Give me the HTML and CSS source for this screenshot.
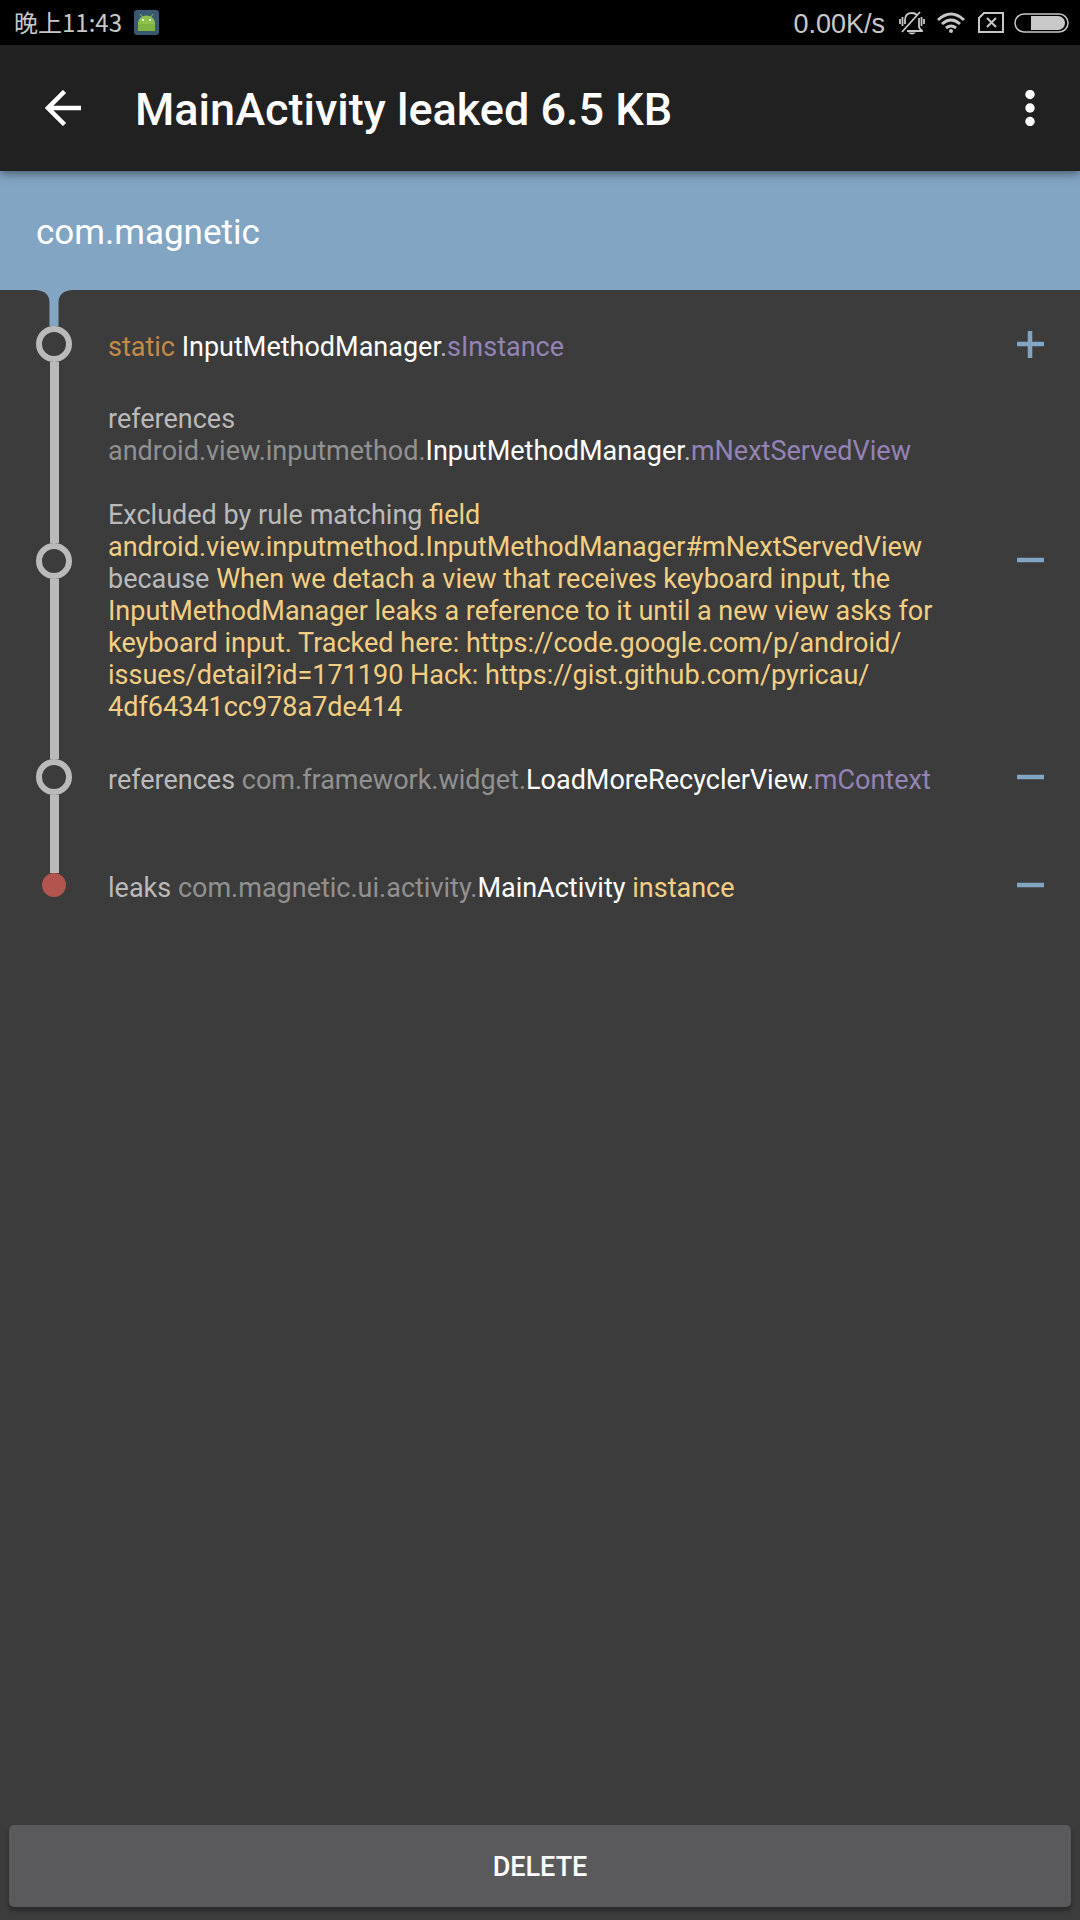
FILE: index.html
```html
<!DOCTYPE html>
<html lang="en">
<head>
<meta charset="utf-8">
<meta name="viewport" content="width=device-width, initial-scale=1">
<title>MainActivity leaked 6.5 KB</title>
<link rel="stylesheet" href="styles.css">
</head>
<body>
<div class="screen">
  <div class="status">
    <span class="status-text">晚上11:43</span>
    <svg class="app-icon" width="25" height="25" viewBox="0 0 25 25" aria-hidden="true">
      <rect width="25" height="25" rx="3" fill="#395972"/>
      <path d="M6 4l3 4M19 4l-3 4" stroke="#8bc34a" stroke-width="1"/>
      <path d="M4 21V13a8.500 7.500 0 0 1 17 0v8z" fill="#8bc34a"/>
      <path d="M4 14h17v7H4z" fill="#7fb344"/>
      <circle cx="9" cy="10" r="1" fill="#fff"/><circle cx="16" cy="10" r="1" fill="#fff"/>
    </svg>
    <span class="status-text status-speed">0.00K/s</span>
    <svg class="bell" width="26" height="24" viewBox="0 0 26 24" fill="none" stroke="#c8c8c8" stroke-width="1.800" aria-hidden="true">
      <path d="M6 13V9q0-7 7-7 3 0 5 2M20 7v8q0 3 3 4.500V20H8M1 8v5M3.500 6v9M25 8v5M22.500 6v9M3 21L21 1"/>
      <path d="M9 21.500h8q-4 4-8 0z" fill="#c8c8c8" stroke="none"/>
    </svg>
    <svg class="wifi" width="28" height="22" viewBox="0 0 28 22" fill="none" stroke="#c8c8c8" stroke-width="3" aria-hidden="true">
      <path d="M1 8q13-12 26 0M5 12q9-8 18 0M9 16q5-4 10 0"/>
      <circle cx="14" cy="19" r="2" fill="#c8c8c8" stroke="none"/>
    </svg>
    <svg class="sim" width="26" height="21" viewBox="0 0 26 21" fill="none" stroke="#c8c8c8" stroke-width="2" aria-hidden="true">
      <path d="M1 6l5-5h19v19H1zM9 6l9 9M18 6l-9 9"/>
    </svg>
    <svg class="battery" width="55" height="20" viewBox="0 0 55 20" aria-hidden="true">
      <rect x="1" y="1" width="53" height="18" rx="9" fill="none" stroke="#c8c8c8" stroke-width="1.500"/>
      <path d="M17 3h27a7 7 0 0 1 0 14H17z" fill="#c8c8c8"/>
    </svg>
  </div>

  <header class="toolbar">
    <button class="icon-button" type="button" aria-label="Back">
      <svg width="36" height="36" viewBox="0 0 36 36" fill="none" stroke="#fff" stroke-width="4.500" aria-hidden="true"><path d="M36 18H3M19.500 1.500L3 18l16.500 16.500"/></svg>
    </button>
    <h1 class="title">MainActivity leaked 6.5 KB</h1>
    <button class="icon-button" type="button" aria-label="More options">
      <svg width="10" height="36" viewBox="0 0 10 36" fill="#fff" aria-hidden="true"><circle cx="5" cy="4.500" r="4.700"/><circle cx="5" cy="18" r="4.700"/><circle cx="5" cy="31.500" r="4.700"/></svg>
    </button>
  </header>

  <main class="trace">
    <h2 class="package">com.magnetic</h2>
    <ul class="rows">
      <li class="row">
        <span class="rail">
          <svg class="funnel" width="36" height="36" viewBox="0 0 36 36" aria-hidden="true"><path d="M0 0H36Q22.500 1 22.500 13V36H13.500V13Q13.500 1 0 0z" fill="#83a5c4"/></svg>
          <span class="node"></span><span class="line"></span>
        </span>
        <p class="text"><span class="keyword">static</span> <span class="class">InputMethodManager</span>.<span class="field">sInstance</span></p>
        <button class="toggle" type="button" aria-label="Expand"><svg width="27" height="27" viewBox="0 0 27 27" stroke="#83a5c4" stroke-width="4.500" aria-hidden="true"><path d="M0 13h27M13 0v27"/></svg></button>
      </li>
      <li class="row">
        <span class="rail"><span class="line"></span><span class="node"></span><span class="line"></span></span>
        <p class="text">references <span class="dim">android.view.inputmethod.</span><span class="class">InputMethodManager</span>.<span class="field">mNextServedView</span><br><br>Excluded by rule matching <span class="extra">field android.view.inputmethod.InputMethodManager#mNextServedView</span> because <span class="extra">When we detach a view that receives keyboard input, the InputMethodManager leaks a reference to it until a new view asks for keyboard input. Tracked here: https://code.google.com/p/android/<wbr>issues/detail?id=171190 Hack: https://gist.github.com/pyricau/<wbr>4df64341cc978a7de414</span></p>
        <button class="toggle" type="button" aria-label="Collapse"><svg width="27" height="27" viewBox="0 0 27 27" stroke="#83a5c4" stroke-width="4.500" aria-hidden="true"><path d="M0 13h27"/></svg></button>
      </li>
      <li class="row">
        <span class="rail"><span class="line"></span><span class="node"></span><span class="line"></span></span>
        <p class="text">references <span class="dim">com.framework.widget.</span><span class="class">LoadMoreRecyclerView</span>.<span class="field">mContext</span></p>
        <button class="toggle" type="button" aria-label="Collapse"><svg width="27" height="27" viewBox="0 0 27 27" stroke="#83a5c4" stroke-width="4.500" aria-hidden="true"><path d="M0 13h27"/></svg></button>
      </li>
      <li class="row">
        <span class="rail"><span class="line"></span><span class="node node-leak"></span><span class="line line-none"></span></span>
        <p class="text">leaks <span class="dim">com.magnetic.ui.activity.</span><span class="class">MainActivity</span> <span class="extra">instance</span></p>
        <button class="toggle" type="button" aria-label="Collapse"><svg width="27" height="27" viewBox="0 0 27 27" stroke="#83a5c4" stroke-width="4.500" aria-hidden="true"><path d="M0 13h27"/></svg></button>
      </li>
    </ul>
  </main>

  <footer class="actions">
    <button class="delete" type="button">DELETE</button>
  </footer>
</div>
</body>
</html>
```
FILE: styles.css
```css
* { box-sizing: border-box; }
body {
  margin: 0;
  background: #3c3c3c;
  color: #bababa;
  font-family: Roboto, "Noto Sans CJK SC", sans-serif;
}
h1, h2, p, ul { margin: 0; padding: 0; font-weight: 400; }
button { margin: 0; padding: 0; border: 0; background: none; font: inherit; color: inherit; }
svg { display: block; flex: none; }

.screen { min-height: 100vh; display: flex; flex-direction: column; }

.status {
  height: 45px;
  padding: 0 11px 0 14px;
  display: flex;
  align-items: center;
  background: #000;
  color: #c8c8c8;
}
.status-text {
  padding-bottom: 2px;
  font-family: "Noto Sans CJK SC", sans-serif;
  font-size: 24px;
  line-height: 28px;
}
.app-icon { margin-left: 12px; }
.status-speed {
  margin-left: auto;
  padding: 2px 0 0;
  font-family: "Liberation Sans", sans-serif;
  font-size: 27px;
}
.bell { margin-left: 14px; }
.wifi { margin-left: 12px; }
.sim { margin-left: 13px; }
.battery { margin-left: 10px; }

.toolbar {
  position: relative;
  height: 126px;
  padding: 0 14px 0 27px;
  display: flex;
  align-items: center;
  background: #212121;
  color: #fff;
  box-shadow: 0 2px 10px rgba(0, 0, 0, 0.5);
}
.icon-button { width: 72px; height: 72px; display: grid; place-items: center; }
.title {
  flex: 1;
  margin-left: 36px;
  padding-top: 4px;
  font-size: 45px;
  line-height: 54px;
  font-weight: 500;
}

.trace { flex: 1; }
.package {
  padding: 38px 36px 34px;
  background: #83a5c4;
  color: #fff;
  font-size: 35px;
  line-height: 47px;
}
.rows { list-style: none; }
.row { min-height: 108px; display: flex; align-items: stretch; }
.rail {
  width: 36px;
  margin-left: 36px;
  flex: none;
  display: flex;
  flex-direction: column;
  align-items: center;
}
.line { flex: 1; width: 9px; background: #bababa; }
.line-none { background: none; }
.node { width: 36px; height: 36px; border: 6px solid #bababa; border-radius: 50%; }
.node-leak { width: 24px; height: 24px; border: 0; background: #b1554e; }
.text {
  flex: 1;
  align-self: center;
  margin: 0 36px;
  padding-top: 5px;
  font-size: 27px;
  line-height: 32px;
}
.toggle { align-self: center; width: 27px; margin-right: 36px; flex: none; }
.keyword { color: #c48a47; }
.class { color: #fff; }
.field { color: #9483b6; }
.dim { color: #919191; }
.extra { color: #f3cf83; }

.actions { padding: 9px 9px 13px; }
.delete {
  width: 100%;
  height: 82px;
  padding-top: 2px;
  border-radius: 5px;
  background: #5a5a5c;
  color: #fff;
  font-size: 27px;
  line-height: 32px;
  font-weight: 500;
  box-shadow: 0 4px 5px rgba(0, 0, 0, 0.3);
}
```
